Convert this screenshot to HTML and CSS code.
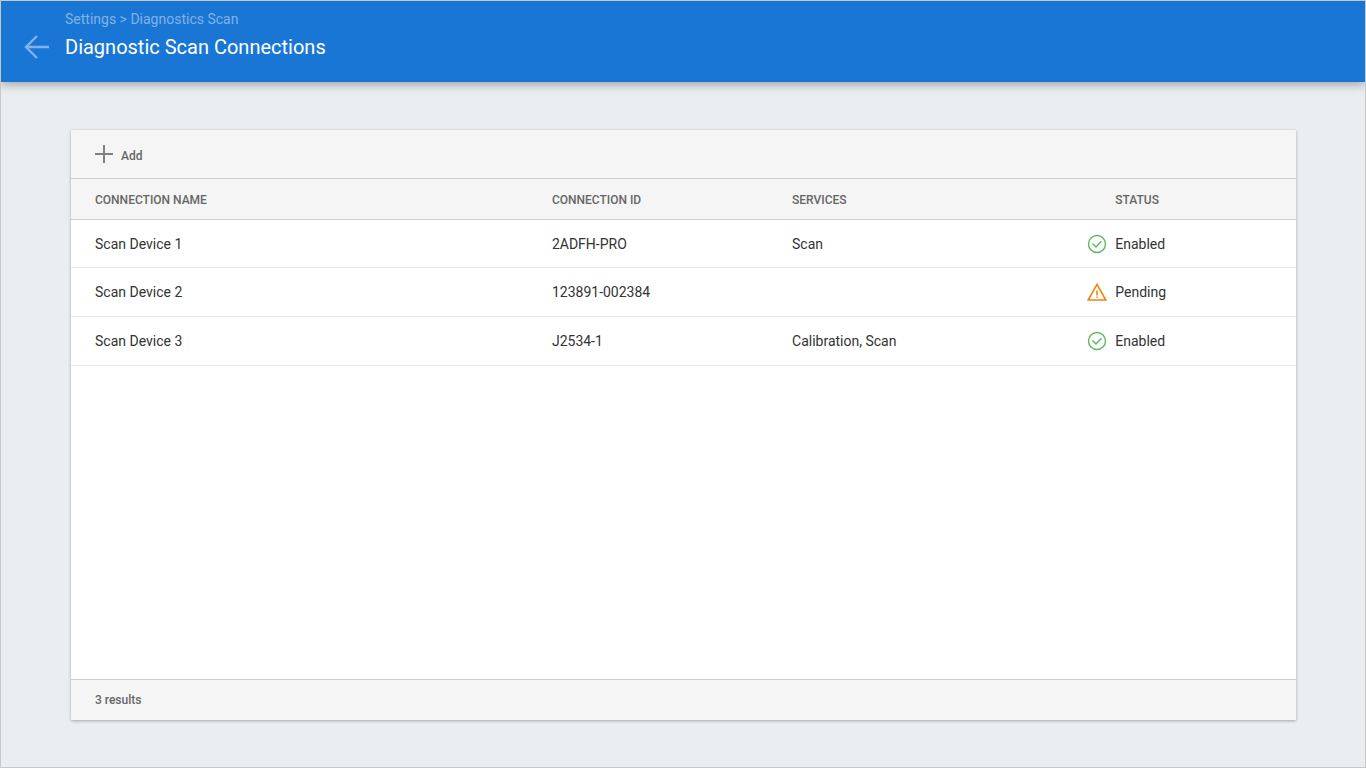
FILE: index.html
```
<!DOCTYPE html>
<html lang="en">
<head>
    <meta charset="UTF-8">
    <title>Diagnostic Scan Connections</title>
    <link rel="stylesheet" href="styles.css">
</head>
<body>
    <header class="header">
        <a href="#" class="back" aria-label="Back">
            <svg width="26" height="24" viewBox="0 0 26 24"><path d="M26 12H3M14 1L3 12l11 11"/></svg>
        </a>
        <div class="heading">
            <nav class="breadcrumb"><a href="#">Settings</a> &gt; <a href="#">Diagnostics Scan</a></nav>
            <h1>Diagnostic Scan Connections</h1>
        </div>
    </header>
    <main class="content">
        <section class="panel">
            <div class="toolbar">
                <button type="button" class="add">
                    <svg width="18" height="18" viewBox="0 0 18 18"><path d="M9 0v18M0 9h18"/></svg>
                    <span>Add</span>
                </button>
            </div>
            <div class="list">
                <table>
                    <thead>
                        <tr>
                            <th class="col-name">Connection Name</th>
                            <th class="col-id">Connection ID</th>
                            <th class="col-services">Services</th>
                            <th class="col-status">Status</th>
                        </tr>
                    </thead>
                    <tbody>
                        <tr>
                            <td>Scan Device 1</td>
                            <td>2ADFH-PRO</td>
                            <td>Scan</td>
                            <td>
                                <div class="status">
                                    <svg class="enabled" width="20" height="20" viewBox="0 0 20 20"><circle cx="10" cy="10" r="8.5"/><path d="M5.6 9.6l3.4 3.4 5.4-5.8"/></svg>
                                    <span>Enabled</span>
                                </div>
                            </td>
                        </tr>
                        <tr>
                            <td>Scan Device 2</td>
                            <td>123891-002384</td>
                            <td></td>
                            <td>
                                <div class="status">
                                    <svg class="pending" width="20" height="20" viewBox="0 0 20 20"><path d="M10 2.4L1.2 18h17.6z"/><path d="M10 8.6v4.8M10 14.4v1.4"/></svg>
                                    <span>Pending</span>
                                </div>
                            </td>
                        </tr>
                        <tr>
                            <td>Scan Device 3</td>
                            <td>J2534-1</td>
                            <td>Calibration, Scan</td>
                            <td>
                                <div class="status">
                                    <svg class="enabled" width="20" height="20" viewBox="0 0 20 20"><circle cx="10" cy="10" r="8.5"/><path d="M5.6 9.6l3.4 3.4 5.4-5.8"/></svg>
                                    <span>Enabled</span>
                                </div>
                            </td>
                        </tr>
                    </tbody>
                </table>
            </div>
            <footer class="results">3 results</footer>
        </section>
    </main>
</body>
</html>
```
FILE: styles.css
```
*{
    box-sizing: border-box;
    margin: 0;
    padding: 0;
}
body{
    display: flex;
    flex-direction: column;
    min-height: 100vh;
    border: 1px solid #c8c8c8;
    background: #eaeef1;
    color: #333;
    font-family: Roboto, "Liberation Sans", sans-serif;
    font-size: 14px;
}
a{
    color: inherit;
    text-decoration: none;
}
svg{
    display: block;
    flex: none;
    fill: none;
}

/* header */
.header{
    display: flex;
    align-items: flex-end;
    gap: 16px;
    padding: 8px 22px 20px;
    background: #1976d4;
    color: #fff;
    box-shadow: 0 2px 10px rgba(0, 0, 0, .35);
}
.back{
    padding-bottom: 3px;
}
.back svg{
    stroke: #80b3e8;
    stroke-width: 2.4;
}
.breadcrumb{
    color: #80b3e8;
    line-height: 20px;
}
h1{
    margin-top: 3px;
    font-size: 20px;
    font-weight: 400;
    line-height: 30px;
}

/* connections panel */
.content{
    display: flex;
    flex: 1;
    padding: 48px 69px 47px 70px;
}
.panel{
    display: flex;
    flex: 1;
    flex-direction: column;
    background: #fff;
    box-shadow: 0 1px 3px rgba(0, 0, 0, .3);
}
.toolbar{
    padding: 0 24px;
    border-bottom: 1px solid #ccc;
    background: #f5f5f5;
}
.add{
    display: flex;
    align-items: center;
    gap: 8px;
    height: 48px;
    border: 0;
    background: none;
    color: #666;
    font: 500 12px Roboto, "Liberation Sans", sans-serif;
    cursor: pointer;
}
.add svg{
    stroke: #808080;
    stroke-width: 2;
}
.add span{
    padding-top: 3px;
}
.list{
    flex: 1;
}
table{
    width: 100%;
    border-spacing: 0;
    table-layout: fixed;
}
th, td{
    padding-left: 24px;
    text-align: left;
}
th{
    height: 41px;
    padding-top: 2px;
    border-bottom: 1px solid #ccc;
    background: #f5f5f5;
    color: #666;
    font-size: 12px;
    font-weight: 500;
    text-transform: uppercase;
}
td{
    height: 49px;
    border-bottom: 1px solid #eaeaea;
}
tbody tr:first-child td{
    height: 48px;
}
.col-name{
    width: 37.3%;
}
.col-id{
    width: 19.6%;
}
.col-services{
    width: 24.1%;
}
.col-status{
    padding-left: 52px;
}
.status{
    display: flex;
    align-items: center;
    gap: 8px;
}
.enabled{
    stroke: #5cb860;
    stroke-width: 1.4;
}
.pending{
    stroke: #f5820b;
    stroke-width: 1.6;
}
.results{
    padding: 0 24px;
    border-top: 1px solid #ccc;
    background: #f5f5f5;
    color: #666;
    font-size: 12px;
    font-weight: 500;
    line-height: 40px;
}
```
